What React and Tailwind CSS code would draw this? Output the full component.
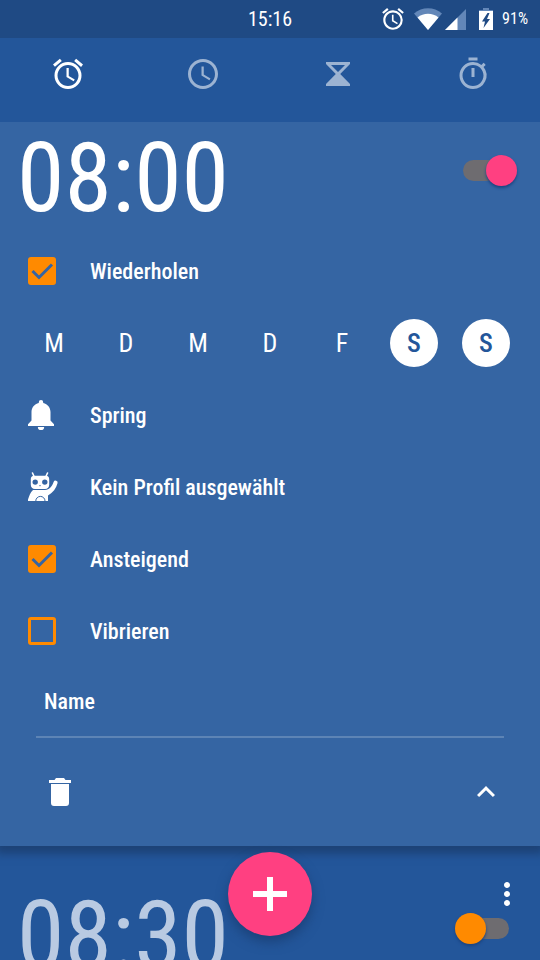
import { useState } from 'react';
import { MdAlarm, MdAccessTime, MdOutlineTimer, MdExpandLess, MdMoreVert } from 'react-icons/md';
import clsx from 'clsx';

const DAYS = [
  { id: 'mo', letter: 'M', name: 'Montag' },
  { id: 'di', letter: 'D', name: 'Dienstag' },
  { id: 'mi', letter: 'M', name: 'Mittwoch' },
  { id: 'do', letter: 'D', name: 'Donnerstag' },
  { id: 'fr', letter: 'F', name: 'Freitag' },
  { id: 'sa', letter: 'S', name: 'Samstag' },
  { id: 'so', letter: 'S', name: 'Sonntag' }
];

function HourglassIcon() {
  return (
    <svg width="36" height="36" viewBox="0 0 36 36" fill="currentColor">
      <path fillRule="evenodd" d="M6 6h24v2L20.200 18 30 28v2H6v-2l9.800-10L6 8zM11 9l7 7 7-7z" />
    </svg>
  );
}

function BellIcon() {
  return (
    <svg width="26" height="30" viewBox="0 0 26 30" fill="currentColor">
      <path d="M13 0a2.200 2.200 0 0 0-2.200 2.200v.8C6.300 4 3.500 7.600 3.500 12v8.500L0 24.200V26h26v-1.800l-3.500-3.700V12c0-4.400-2.800-8-7.300-9v-.8A2.200 2.200 0 0 0 13 0z" />
      <path d="M9.800 27h6.400a3.200 3.200 0 0 1-6.400 0z" />
    </svg>
  );
}

function MascotIcon() {
  return (
    <svg width="30" height="30" viewBox="0 0 30 30" fill="currentColor">
      <path d="M4.500 1l1.800 4M19.500 1l-1.800 4" stroke="currentColor" strokeWidth="1.600" strokeLinecap="round" />
      <path fillRule="evenodd" d="M6 3.800h12c2.200 0 3.200 1.400 3.200 3.400v5.600c0 2.600-1.600 4.200-4.200 4.200H7c-2.600 0-4.200-1.600-4.200-4.200V7.200c0-2 1-3.400 3.200-3.400zM7.200 7.400a2.700 2.700 0 1 0 0 5.400 2.700 2.700 0 0 0 0-5.400zM16.800 7.400a2.700 2.700 0 1 0 0 5.400 2.700 2.700 0 0 0 0-5.400zM11 13.300l1 1.200 1-1.200z" />
      <path d="M5 18h12c4.500-.6 7.200-3.700 8.600-8.100a2.100 2.100 0 0 1 4 1.200c-1.400 5.500-4.600 9.600-9.600 12.400V29H0v-1.500c1.400-4 2.200-7 5-9.500z" />
      <path d="M7.800 29a4.600 4.600 0 0 1 9.200 0" fill="none" stroke="#3565a3" strokeWidth="1" />
    </svg>
  );
}

function TrashIcon() {
  return (
    <svg width="22" height="28" viewBox="0 0 22 28" fill="currentColor">
      <path d="M0 2h5.500L7 0h8l1.500 2H22v3H0zM2 6h18v19a3 3 0 0 1-3 3H5a3 3 0 0 1-3-3z" />
    </svg>
  );
}

function StatusBar() {
  return (
    <header className="relative flex h-[38px] shrink-0 items-center justify-end bg-[#1f4a84] pr-3">
      <time className="absolute inset-x-0 text-center text-xl leading-[38px]">15:16</time>
      <MdAlarm size={26} />
      <svg className="ml-2" width="28" height="22" viewBox="0 0 28 22">
        <path d="M14 22L0 5.500C8-1.500 20-1.500 28 5.500z" fill="#6387b8" />
        <path d="M14 22L3.500 9.500c6-5 15-5 21 0z" fill="#fff" />
      </svg>
      <svg className="ml-[3px]" width="21" height="21" viewBox="0 0 21 21">
        <path d="M0 21L21 0v21z" fill="#6387b8" />
        <path d="M0 21L12.500 8.500V21z" fill="#fff" />
      </svg>
      <svg className="ml-3" width="16" height="22" viewBox="0 0 16 22">
        <path d="M5 0h6v2h4v3H1V2h4z" fill="#6387b8" />
        <path d="M1 3h14v19H1z" fill="#fff" />
        <path d="M9.500 5L4 13.500h3L5.500 20l6.500-9H9l2.500-6z" fill="#1f4a84" />
      </svg>
      <span className="ml-2 text-base">91%</span>
    </header>
  );
}

function Tabs() {
  const [active, setActive] = useState('alarm');
  const tabs = [
    { id: 'alarm', label: 'Wecker', icon: <MdAlarm size={36} /> },
    { id: 'clock', label: 'Uhr', icon: <MdAccessTime size={36} /> },
    { id: 'timer', label: 'Timer', icon: <HourglassIcon /> },
    { id: 'stopwatch', label: 'Stoppuhr', icon: <MdOutlineTimer size={36} /> }
  ];

  return (
    <nav className="grid h-[84px] shrink-0 grid-cols-4 pb-3">
      {tabs.map((tab) => (
        <button key={tab.id} type="button" aria-label={tab.label} onClick={() => setActive(tab.id)} className={clsx('flex items-center justify-center', active === tab.id ? 'text-white' : 'text-white/55')}>
          {tab.icon}
        </button>
      ))}
    </nav>
  );
}

function Switch({ label, checked, onChange }) {
  return (
    <label className="relative block h-8 w-[62px] cursor-pointer">
      <input type="checkbox" aria-label={label} checked={checked} onChange={(e) => onChange(e.target.checked)} className="peer sr-only" />
      <span className="absolute inset-x-2 top-[5px] h-[21px] rounded-full bg-[#6e6c70]" />
      <span className="absolute left-0 top-0 size-[31px] rounded-full bg-[#ff8a00] shadow-[0_2px_3px_#1b4480] peer-checked:translate-x-[31px] peer-checked:bg-[#ff4081]" />
    </label>
  );
}

function TimeRow({ time, checked, onChange }) {
  return (
    <div className="flex items-start justify-between pl-[17px] pr-[23px]">
      <button type="button" className={clsx('text-[96px] leading-[113px]', !checked && 'text-[#b9cae2]')}>{time}</button>
      <div className="pt-[33px]">
        <Switch label={`Wecker ${time}`} checked={checked} onChange={onChange} />
      </div>
    </div>
  );
}

function CheckRow({ id, label, checked, onChange }) {
  return (
    <div className="flex h-18 items-center px-7">
      <span className="relative size-7">
        <input id={id} type="checkbox" checked={checked} onChange={(e) => onChange(e.target.checked)} className="peer block size-7 appearance-none rounded-[3px] border-3 border-[#ff8a00] checked:bg-[#ff8a00]" />
        <svg className="pointer-events-none absolute inset-0 hidden peer-checked:block" width="28" height="28" viewBox="0 0 28 28" fill="none" stroke="#3565a3" strokeWidth="3">
          <path d="M4.500 14l6.500 6.500L24 7.500" />
        </svg>
      </span>
      <label htmlFor={id} className="pl-[34px] text-[22px] font-medium">{label}</label>
    </div>
  );
}

function PickerRow({ icon, label }) {
  return (
    <button type="button" className="flex h-18 w-full items-center px-7 text-left text-[22px] font-medium">
      <span className="w-[62px]">{icon}</span>
      {label}
    </button>
  );
}

export default function App() {
  const [firstOn, setFirstOn] = useState(true);
  const [secondOn, setSecondOn] = useState(false);
  const [repeat, setRepeat] = useState(true);
  const [rising, setRising] = useState(true);
  const [vibrate, setVibrate] = useState(false);
  const [days, setDays] = useState(['sa', 'so']);
  const [name, setName] = useState('');

  const toggleDay = (id) => {
    setDays(days.includes(id) ? days.filter((d) => d !== id) : [...days, id]);
  };

  return (
    <div className="relative flex h-screen flex-col overflow-hidden bg-[#23569a] font-['Roboto_Condensed',Roboto,sans-serif] text-white">
      <StatusBar />
      <Tabs />

      <main className="min-h-0 grow overflow-hidden">
        <section className="bg-[#3565a3] shadow-[0_4px_8px_4px_#1d4378] [clip-path:inset(0_0_-20px_0)]">
          <TimeRow time="08:00" checked={firstOn} onChange={setFirstOn} />

          <CheckRow id="repeat" label="Wiederholen" checked={repeat} onChange={setRepeat} />

          <div className="grid h-18 grid-cols-7 items-center justify-items-center px-[18px]">
            {DAYS.map((day) => (
              <button key={day.id} type="button" aria-label={day.name} aria-pressed={days.includes(day.id)} onClick={() => toggleDay(day.id)} className={clsx('size-12 rounded-full text-[26px]', days.includes(day.id) && 'bg-white font-medium text-[#23569a]')}>
                {day.letter}
              </button>
            ))}
          </div>

          <PickerRow icon={<BellIcon />} label="Spring" />
          <PickerRow icon={<MascotIcon />} label="Kein Profil ausgewählt" />
          <CheckRow id="rising" label="Ansteigend" checked={rising} onChange={setRising} />
          <CheckRow id="vibrate" label="Vibrieren" checked={vibrate} onChange={setVibrate} />

          <div className="px-9">
            <input type="text" aria-label="Name" placeholder="Name" value={name} onChange={(e) => setName(e.target.value)} className="block h-[71px] w-full border-b-2 border-[#5d84b5] px-2 text-[22px] font-medium outline-none placeholder:text-white" />
          </div>

          <div className="flex h-[108px] items-center justify-between pl-[49px] pr-9">
            <button type="button" aria-label="Löschen"><TrashIcon /></button>
            <button type="button" aria-label="Einklappen"><MdExpandLess size={36} /></button>
          </div>
        </section>

        <section className="relative pt-[34px]">
          <button type="button" aria-label="Mehr" className="absolute right-[15px] top-[30px]">
            <MdMoreVert size={36} />
          </button>
          <TimeRow time="08:30" checked={secondOn} onChange={setSecondOn} />
        </section>
      </main>

      <button type="button" aria-label="Wecker hinzufügen" className="absolute bottom-6 left-1/2 flex size-[84px] -translate-x-1/2 items-center justify-center rounded-full bg-[#ff4081] shadow-[0_6px_12px_#1b427a]">
        <svg width="34" height="34" viewBox="0 0 34 34" fill="currentColor">
          <path d="M14 0h6v14h14v6H20v14h-6V20H0v-6h14z" />
        </svg>
      </button>
    </div>
  );
}
